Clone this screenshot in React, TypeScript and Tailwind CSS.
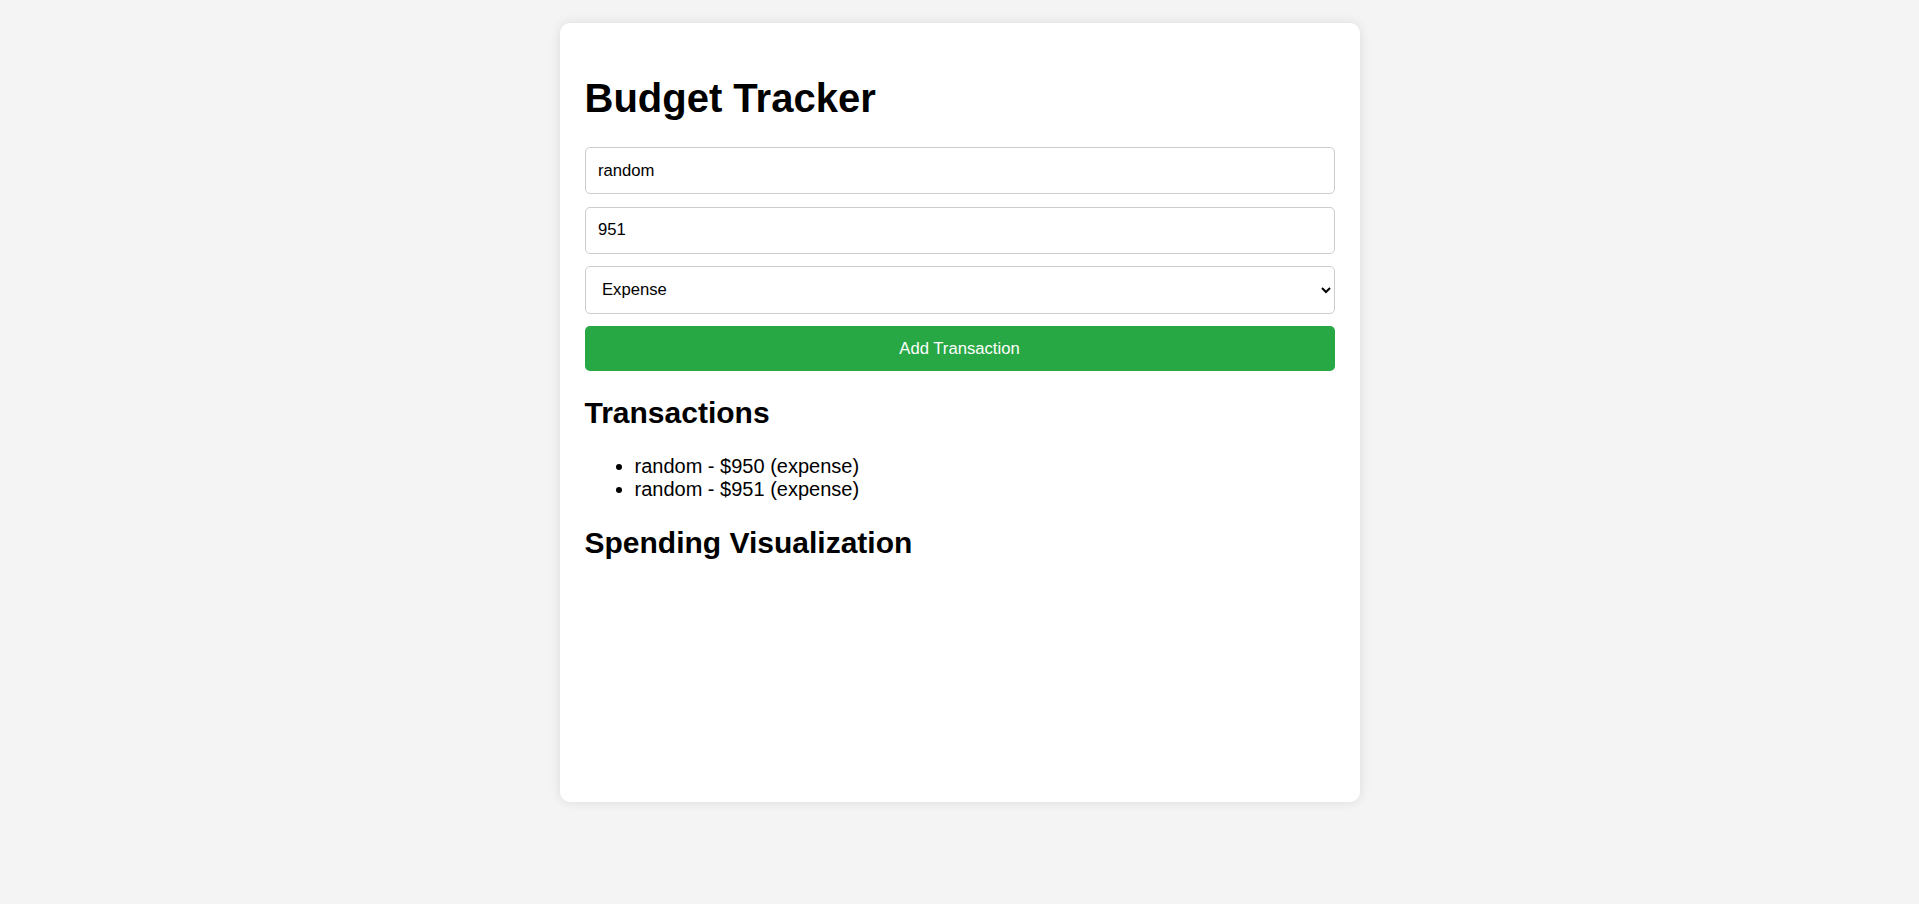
import React from "react";

export default function App() {
  return (
    <div
      className="min-h-screen bg-[#f4f4f4] pt-[23px] text-black"
      style={{ fontFamily: '"Liberation Sans", Arial, sans-serif' }}
    >
      <div className="mx-auto w-[800px] rounded-[10px] bg-white p-[25px] shadow-[0_0_12px_rgba(0,0,0,0.1)]">
        <h1 className="mt-[26.5px] mb-[26.5px] text-[40px] font-bold leading-[46px]">Budget Tracker</h1>
        <input
          type="text"
          defaultValue="random"
          className="mb-[12.5px] block h-[47px] w-full rounded-[5px] border border-[#ccc] px-[12.5px] text-[16.67px] outline-none"
        />
        <input
          type="number"
          defaultValue="951"
          className="mb-[12.5px] block h-[47px] w-full rounded-[5px] border border-[#ccc] px-[12.5px] text-[16.67px] outline-none [appearance:textfield]"
        />
        <select
          defaultValue="expense"
          className="mb-[12.5px] block h-[47.5px] w-full rounded-[5px] border border-[#ccc] bg-white px-[12.5px] text-[16.67px] outline-none"
        >
          <option value="income">Income</option>
          <option value="expense">Expense</option>
        </select>
        <button className="block h-[45px] w-full rounded-[5px] bg-[#28a745] text-[16.67px] text-white">
          Add Transaction
        </button>
        <h2 className="mt-[25px] mb-[24px] text-[30px] font-bold leading-[34.5px]">Transactions</h2>
        <ul className="list-disc pl-[50px] text-[20px] leading-[23px]">
          <li>random - $950 (expense)</li>
          <li>random - $951 (expense)</li>
        </ul>
        <h2 className="mt-[25px] mb-[25px] text-[30px] font-bold leading-[34.5px]">Spending Visualization</h2>
        <div className="h-[192px]" />
      </div>
    </div>
  );
}
